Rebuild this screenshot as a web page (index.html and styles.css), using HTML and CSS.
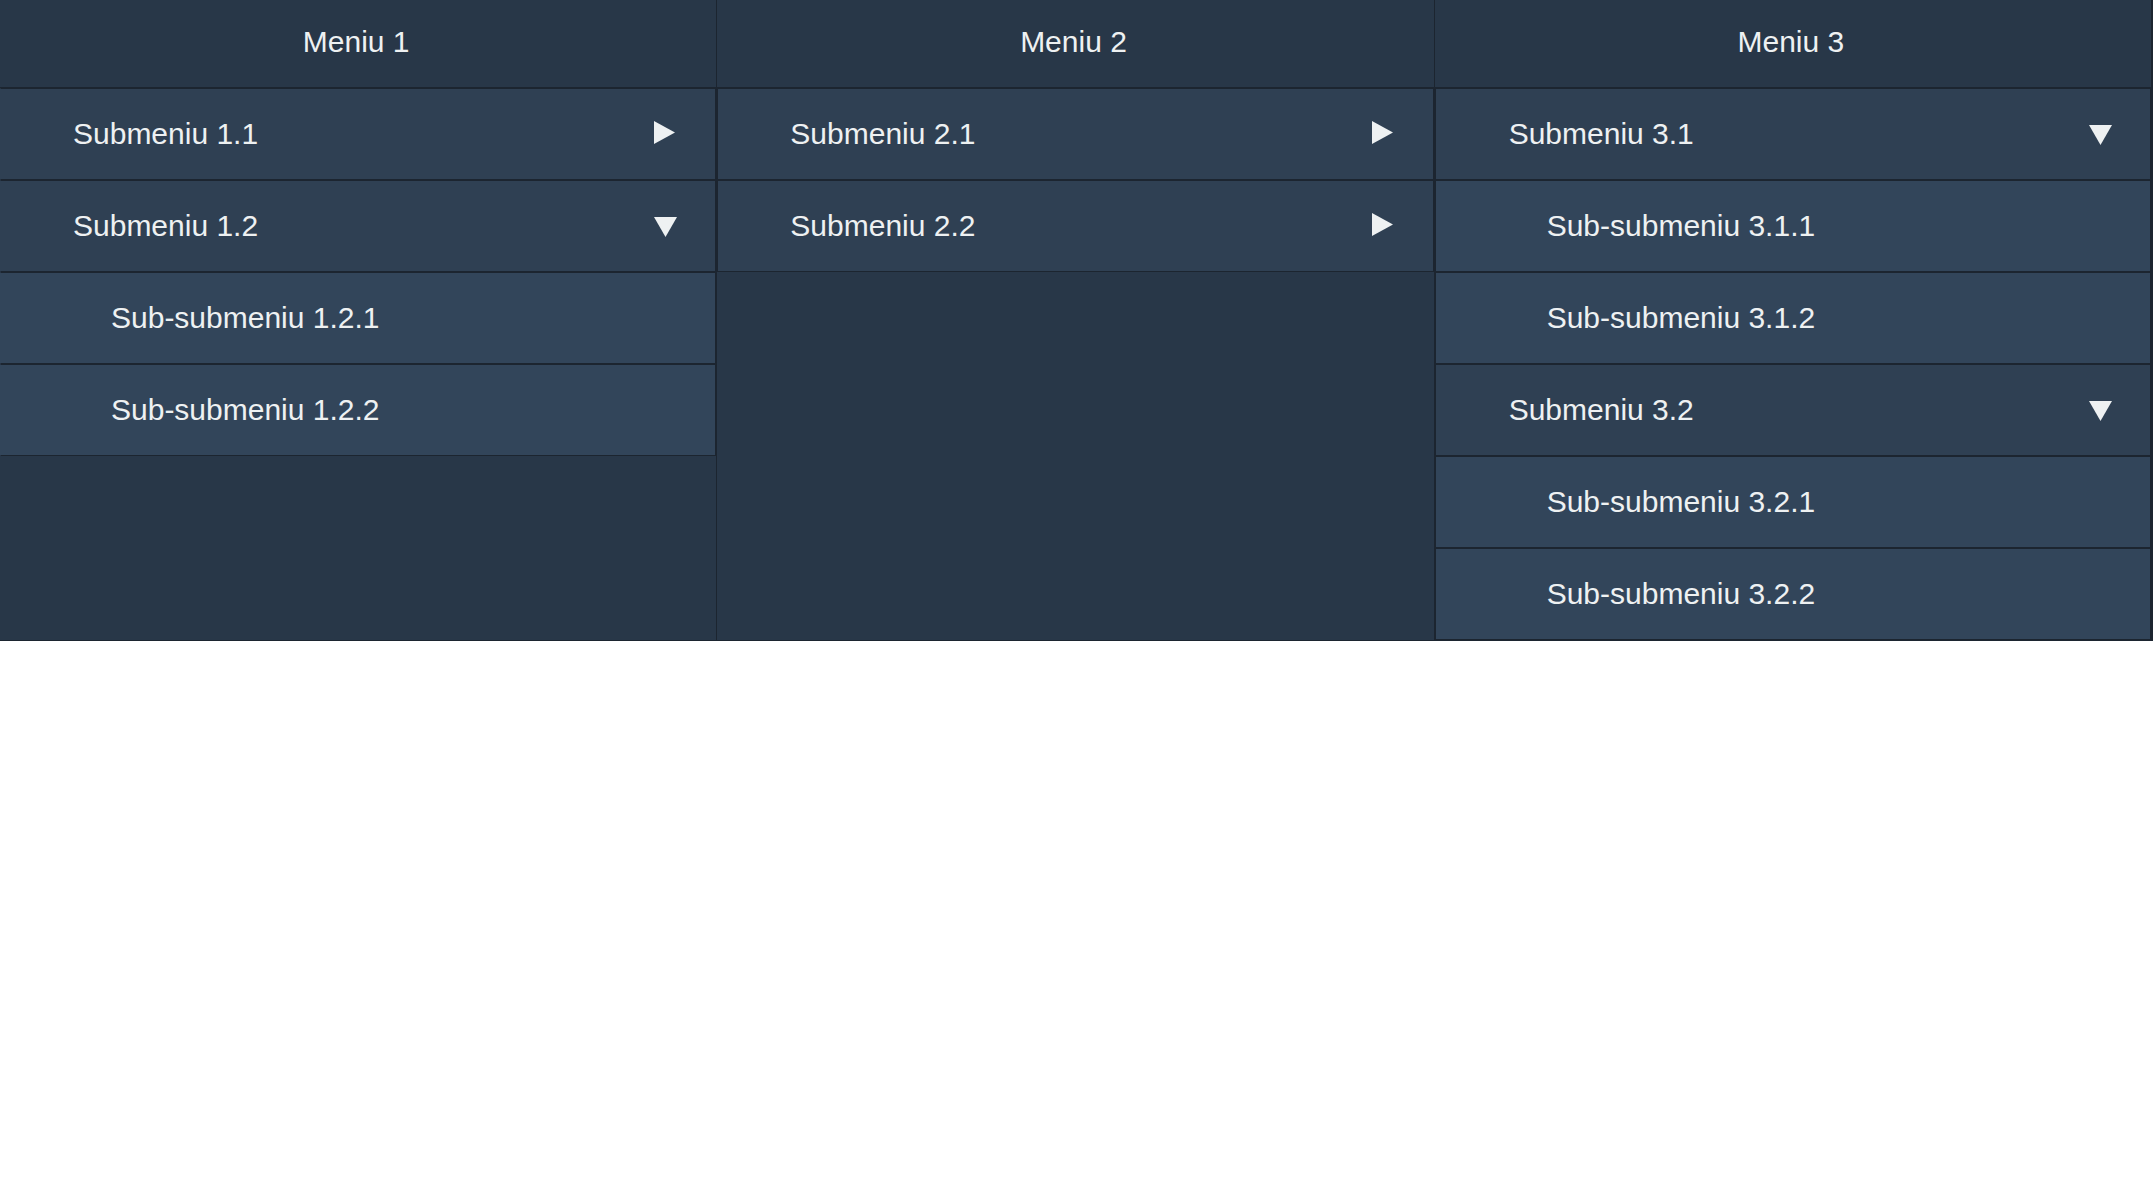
FILE: index.html
```html
<!DOCTYPE html>
<html lang="ro">
<head>
<meta charset="utf-8">
<title>Meniu</title>
<link rel="stylesheet" href="styles.css">
</head>
<body>
<nav class="menu">
  <div class="col">
    <div class="col-title">Meniu 1</div>
    <ul class="sub">
      <li>
        <div class="row"><span class="label">Submeniu 1.1</span><span class="icon"><svg class="tri-right" viewBox="0 0 21 23" width="21" height="23"><polygon points="0,0 21,11.5 0,23"/></svg></span></div>
      </li>
      <li>
        <div class="row"><span class="label">Submeniu 1.2</span><span class="icon"><svg class="tri-down" viewBox="0 0 23 20" width="23" height="20"><polygon points="0,0 23,0 11.5,20"/></svg></span></div>
        <ul class="subsub">
          <li class="row leaf"><span class="label">Sub-submeniu 1.2.1</span></li>
          <li class="row leaf"><span class="label">Sub-submeniu 1.2.2</span></li>
        </ul>
      </li>
    </ul>
  </div>
  <div class="col">
    <div class="col-title">Meniu 2</div>
    <ul class="sub">
      <li>
        <div class="row"><span class="label">Submeniu 2.1</span><span class="icon"><svg class="tri-right" viewBox="0 0 21 23" width="21" height="23"><polygon points="0,0 21,11.5 0,23"/></svg></span></div>
      </li>
      <li>
        <div class="row"><span class="label">Submeniu 2.2</span><span class="icon"><svg class="tri-right" viewBox="0 0 21 23" width="21" height="23"><polygon points="0,0 21,11.5 0,23"/></svg></span></div>
      </li>
    </ul>
  </div>
  <div class="col">
    <div class="col-title">Meniu 3</div>
    <ul class="sub">
      <li>
        <div class="row"><span class="label">Submeniu 3.1</span><span class="icon"><svg class="tri-down" viewBox="0 0 23 20" width="23" height="20"><polygon points="0,0 23,0 11.5,20"/></svg></span></div>
        <ul class="subsub">
          <li class="row leaf"><span class="label">Sub-submeniu 3.1.1</span></li>
          <li class="row leaf"><span class="label">Sub-submeniu 3.1.2</span></li>
        </ul>
      </li>
      <li>
        <div class="row"><span class="label">Submeniu 3.2</span><span class="icon"><svg class="tri-down" viewBox="0 0 23 20" width="23" height="20"><polygon points="0,0 23,0 11.5,20"/></svg></span></div>
        <ul class="subsub">
          <li class="row leaf"><span class="label">Sub-submeniu 3.2.1</span></li>
          <li class="row leaf"><span class="label">Sub-submeniu 3.2.2</span></li>
        </ul>
      </li>
    </ul>
  </div>
</nav>
</body>
</html>
```

FILE: styles.css
```css
html, body {
  margin: 0;
  padding: 0;
  background: #ffffff;
}

body {
  font-family: "Liberation Sans", Arial, sans-serif;
  font-size: 30px;
  color: #eef1f2;
}

.menu {
  display: flex;
  background: #283748;
  border-bottom: 1px solid #1c2530;
}

.col {
  flex: 1 1 0;
  min-width: 0;
  border-right: 1px solid #1c2530;
}

.col:last-child {
  border-right-width: 2px;
}

.col-title {
  box-sizing: border-box;
  height: 88px;
  border-bottom: 1px solid #1c2530;
  display: flex;
  align-items: center;
  justify-content: center;
  padding: 0 4px 4px 0;
}

.sub,
.subsub {
  list-style: none;
  margin: 0;
  padding: 0;
}

.row {
  height: 90px;
  border: 1px solid #1c2530;
  background: #2f4053;
  display: flex;
  align-items: center;
  padding: 0 37px 0 72px;
}

.col:first-child .row {
  border-left-color: transparent;
}

.col:last-child .row {
  padding-left: 73px;
}

.label {
  flex: 1 1 auto;
  white-space: nowrap;
}

.icon {
  width: 24px;
  display: flex;
  align-items: center;
  justify-content: flex-start;
}

.icon svg {
  display: block;
  fill: #eef1f2;
}

.tri-right {
  margin-top: -3px;
}

.tri-down {
  margin-top: 2px;
}

.leaf {
  background: #32455a;
  padding-left: 110px;
}

.col:last-child .leaf {
  padding-left: 111px;
}
```
